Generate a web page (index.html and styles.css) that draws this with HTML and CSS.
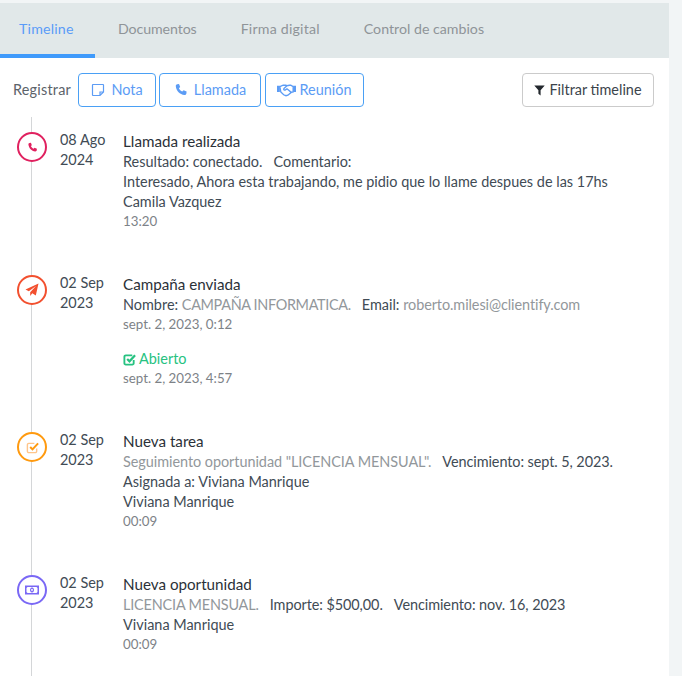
FILE: index.html
```html
<!DOCTYPE html>
<html lang="es">
<head>
<meta charset="utf-8">
<title>Timeline</title>
<link rel="stylesheet" href="styles.css">
</head>
<body>
<div class="card">
  <nav class="tabs">
    <a class="tab active">Timeline</a>
    <a class="tab docs">Documentos</a>
    <a class="tab sign">Firma digital</a>
    <a class="tab">Control de cambios</a>
  </nav>
  <div class="toolbar">
    <span class="reg">Registrar</span>
    <button class="btn blue nota"><svg class="ic" viewBox="0 0 14 14" width="14" height="14"><path d="M2 1.500h10a.5.5 0 0 1 .5.5v7l-3.500 3.500H2a.5.5 0 0 1-.5-.5V2a.5.5 0 0 1 .5-.5zM12.500 9H9v3.500" fill="none" stroke="currentColor" stroke-width="1.200"/></svg>Nota</button>
    <button class="btn blue call"><svg class="ic" viewBox="0 0 14 14" width="14" height="14"><path d="M3.200 1.200 5 1l1.200 3-1.300 1.200c.6 1.500 1.900 2.800 3.400 3.400L9.600 7.300l3 1.200-.2 2c-.1 1-1 1.700-2 1.500C5.800 11.500 2.300 7.800 1.800 3.200c-.1-1 .4-1.900 1.400-2z" fill="currentColor"/></svg>Llamada</button>
    <button class="btn blue meet"><svg class="ic wide" viewBox="0 0 20 14" width="19" height="14"><path d="M0 2.500h3V9H0zM17 2.500h3V9h-3z" fill="currentColor"/><path d="M3 3.500 6.500 2h3l1 .5L13 2h1.500L17 3.500V9l-2 .5-3.500 3-2 .5-2.500-1-3-3zM10.500 2.500 7.300 5.500c-.8 1 .7 2.200 1.800 1.300l1.400-1 4.500 3.700" fill="none" stroke="currentColor" stroke-width="1.400"/></svg>Reunión</button>
    <button class="btn plain"><svg class="ic filter" viewBox="0 0 12 12" width="11" height="12"><path d="M.3 1h11.400L7.200 6.300V12L4.800 10V6.300z" fill="currentColor"/></svg>Filtrar timeline</button>
  </div>

  <div class="timeline">
    <article class="item">
      <div class="dot pink"><svg viewBox="0 0 14 14" width="11" height="11"><path d="M3.200 1.200 5 1l1.200 3-1.300 1.200c.6 1.500 1.900 2.800 3.400 3.400L9.600 7.300l3 1.200-.2 2c-.1 1-1 1.700-2 1.500C5.800 11.500 2.300 7.800 1.800 3.200c-.1-1 .4-1.900 1.400-2z" fill="currentColor"/></svg></div>
      <div class="date">08 Ago<br>2024</div>
      <div class="body">
        <h3>Llamada realizada</h3>
        <p>Resultado: conectado. &nbsp; Comentario:</p>
        <p>Interesado, Ahora esta trabajando, me pidio que lo llame despues de las 17hs</p>
        <p>Camila Vazquez</p>
        <p class="time">13:20</p>
      </div>
    </article>

    <article class="item">
      <div class="dot red"><svg viewBox="0 0 14 14" width="14" height="14"><path d="M13.500.5 10.800 12.500 7.300 10.200 5.200 13V9.200L11 3 3.800 8.300.5 6.500z" fill="currentColor"/></svg></div>
      <div class="date">02 Sep<br>2023</div>
      <div class="body">
        <h3>Campaña enviada</h3>
        <p>Nombre: <span class="mute caps">CAMPAÑA INFORMATICA.</span> &nbsp; Email: <span class="mute tight">roberto.milesi@clientify.com</span></p>
        <p class="time">sept. 2, 2023, 0:12</p>
        <p class="open"><svg viewBox="0 0 14 14" width="13" height="13"><path d="M11.500 7.500V11a1.500 1.500 0 0 1-1.500 1.500H3A1.500 1.500 0 0 1 1.500 11V4A1.500 1.500 0 0 1 3 2.500h7" fill="none" stroke="currentColor" stroke-width="2"/><path d="M4.500 6.500l2.500 2.500 6-6.500" fill="none" stroke="currentColor" stroke-width="2.400"/></svg>Abierto</p>
        <p class="time">sept. 2, 2023, 4:57</p>
      </div>
    </article>

    <article class="item">
      <div class="dot orange"><svg viewBox="0 0 14 14" width="13" height="13"><path d="M11.500 8v3A1.500 1.500 0 0 1 10 12.500H3A1.500 1.500 0 0 1 1.500 11V4A1.500 1.500 0 0 1 3 2.500h6" fill="none" stroke="#ffc58a" stroke-width="1.500"/><path d="M4.500 6.500l2.500 2.500 6-6.500" fill="none" stroke="currentColor" stroke-width="2.200"/></svg></div>
      <div class="date">02 Sep<br>2023</div>
      <div class="body">
        <h3>Nueva tarea</h3>
        <p><span class="mute trim">Seguimiento oportunidad "LICENCIA MENSUAL".</span> &nbsp; <span class="tight">Vencimiento: sept. 5, 2023.</span></p>
        <p>Asignada a: Viviana Manrique</p>
        <p>Viviana Manrique</p>
        <p class="time">00:09</p>
      </div>
    </article>

    <article class="item">
      <div class="dot violet"><svg viewBox="0 0 14 10" width="14" height="10"><path fill-rule="evenodd" d="M0 .5h14v9H0zM2.500 2 1.500 3v4l1 1h9l1-1V3l-1-1z" fill="currentColor"/><path fill-rule="evenodd" d="M7 2.500a2 2.500 0 1 0 .01 0zM7 3.800a.8 1.200 0 1 1-.01 0z" fill="currentColor"/></svg></div>
      <div class="date">02 Sep<br>2023</div>
      <div class="body">
        <h3>Nueva oportunidad</h3>
        <p><span class="mute caps-s">LICENCIA MENSUAL.</span> &nbsp; <span class="tight">Importe: $500,00.</span> &nbsp; <span class="tight">Vencimiento: nov. 16, 2023</span></p>
        <p>Viviana Manrique</p>
        <p class="time">00:09</p>
      </div>
    </article>
  </div>
</div>
</body>
</html>
```
FILE: styles.css
```css
* { box-sizing: border-box; }
html, body { margin: 0; height: 100%; overflow: hidden; }
body {
  background: #f2f5f6;
  padding: 3px 13px 0 0;
  font-family: Lato, "Open Sans", sans-serif;
  font-size: 14.45px;
  line-height: 20px;
  color: #414b55;
}
.card { display: flex; flex-direction: column; background: #fff; height: 673px; overflow: hidden; }
.tabs { flex: none; display: flex; height: 55px; background: #e1e8e9; font-size: 14.2px; }
.tab {
  height: 55px;
  padding: 16px 22px 0 19px;
  color: #8f9498;
  border-bottom: 4px solid transparent;
}
.tab + .tab { padding-left: 23px; padding-right: 21px; }
.tab.active { width: 95px; color: #5a9cf8; border-bottom-color: #3f9afb; letter-spacing: .2px; }
.tab.docs { letter-spacing: -.1px; }
.tab.sign { letter-spacing: .2px; }
.toolbar { flex: none; display: flex; align-items: center; gap: 3px; padding: 15px 15px 0 13px; }
.reg { width: 59px; margin-right: 3px; color: #5c636a; letter-spacing: .2px; white-space: nowrap; }
.btn {
  display: flex;
  align-items: center;
  justify-content: center;
  height: 34px;
  padding: 0;
  background: #fff;
  border: 1px solid #4aa0f5;
  border-radius: 4px;
  font: inherit;
  color: #5c9cf5;
}
.nota { width: 78px; }
.call { width: 102px; }
.meet { width: 99px; margin-left: 1px; }
.ic { margin-right: 6px; }
.ic.wide { margin-right: 3px; }
.btn.plain { width: 132px; margin-left: auto; border-color: #cbcbcb; color: #3c444c; }
.ic.filter { margin-right: 4px; color: #23282d; }
.timeline {
  flex: 1;
  position: relative;
  margin-top: 10px;
  padding-top: 14px;
}
.timeline::before {
  content: "";
  position: absolute;
  left: 31px;
  top: 0;
  bottom: 0;
  width: 1px;
  background: #d4d6d8;
}
.item { display: flex; position: relative; padding-left: 17px; margin-bottom: 42px; }
.dot {
  flex: none;
  display: flex;
  align-items: center;
  justify-content: center;
  width: 30px;
  height: 30px;
  margin-top: 1px;
  background: #fff;
  border: 2.5px solid currentColor;
  border-radius: 50%;
  position: relative;
}
.pink { color: #e0215f; }
.red { color: #f2502f; }
.orange { color: #ff9a0f; }
.violet { color: #7a68f5; }
.date { flex: none; width: 63px; margin-left: 13px; margin-top: -1px; }
.body { flex: 1; min-width: 0; margin-top: 1px; }
h3 { margin: 0 0 1px; height: 19px; font: inherit; font-size: 15.2px; line-height: 19px; color: #2b3138; }
p { margin: 0; white-space: nowrap; }
.mute { color: #92979b; }
.caps { letter-spacing: -.35px; }
.caps-s { letter-spacing: -.18px; }
.tight { letter-spacing: -.08px; }
.trim { letter-spacing: -.05px; }
.time { color: #7d8287; font-size: 13.3px; line-height: 18px; margin-bottom: 2px; }
.open { margin-top: 16px; color: #26c281; display: flex; align-items: center; }
.open svg { margin-right: 3px; }
```
